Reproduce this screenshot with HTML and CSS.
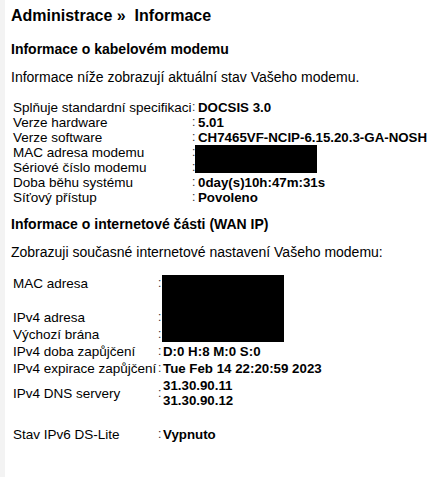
FILE: index.html
```html
<!DOCTYPE html>
<html lang="cs">
<head>
  <meta charset="UTF-8" />
  <title>Informace</title>
  <link rel="stylesheet" href="styles.css">
</head>
<body>
  <div class="page">
    <h1>Administrace &raquo;&nbsp; Informace</h1>

    <h2>Informace o kabelovém modemu</h2>
    <p>Informace níže zobrazují aktuální stav Vašeho modemu.</p>

    <div class="info">
      <table class="modem">
        <tr><td class="label">Splňuje standardní specifikaci</td><td class="colon">:</td><td class="value">DOCSIS 3.0</td></tr>
        <tr><td class="label">Verze hardware</td><td class="colon">:</td><td class="value">5.01</td></tr>
        <tr><td class="label">Verze software</td><td class="colon">:</td><td class="value">CH7465VF-NCIP-6.15.20.3-GA-NOSH</td></tr>
        <tr><td class="label">MAC adresa modemu</td><td class="colon">:</td><td class="value"></td></tr>
        <tr><td class="label">Sériové číslo modemu</td><td class="colon">:</td><td class="value"></td></tr>
        <tr><td class="label">Doba běhu systému</td><td class="colon">:</td><td class="value">0day(s)10h:47m:31s</td></tr>
        <tr><td class="label">Síťový přístup</td><td class="colon">:</td><td class="value">Povoleno</td></tr>
      </table>
      <div class="redact redact-modem"></div>
    </div>

    <h2 class="second">Informace o internetové části (WAN IP)</h2>
    <p>Zobrazuji současné internetové nastavení Vašeho modemu:</p>

    <div class="info">
      <table class="wan">
        <tr><td class="label">MAC adresa</td><td class="colon">:</td><td class="value"></td></tr>
        <tr><td class="label">&nbsp;</td><td class="colon"></td><td class="value"></td></tr>
        <tr><td class="label">IPv4 adresa</td><td class="colon">:</td><td class="value"></td></tr>
        <tr><td class="label">Výchozí brána</td><td class="colon">:</td><td class="value"></td></tr>
        <tr><td class="label">IPv4 doba zapůjčení</td><td class="colon">:</td><td class="value">D:0 H:8 M:0 S:0</td></tr>
        <tr><td class="label">IPv4 expirace zapůjčení</td><td class="colon">:</td><td class="value">Tue Feb 14 22:20:59 2023</td></tr>
        <tr><td class="label">IPv4 DNS servery</td><td class="colon">:</td><td class="value">31.30.90.11<br>31.30.90.12</td></tr>
        <tr><td class="label">&nbsp;</td><td class="colon"></td><td class="value"></td></tr>
        <tr><td class="label">Stav IPv6 DS-Lite</td><td class="colon">:</td><td class="value">Vypnuto</td></tr>
      </table>
      <div class="redact redact-wan"></div>
    </div>
  </div>
</body>
</html>
```

FILE: styles.css
```css
html, body {
  margin: 0;
  height: 100%;
}

body {
  font-family: "Liberation Sans", Arial, sans-serif;
  color: #000;
  background: #fff;
  border-left: 5px solid #f3f3f3;
}

.page {
  padding: 6px 0 0 6px;
}

h1 {
  font-size: 16px;
  font-weight: bold;
  margin: 0 0 14px;
  line-height: 20px;
}

h2 {
  font-size: 14px;
  font-weight: bold;
  margin: 0 0 10px;
  line-height: 18px;
}

h2.second {
  margin-top: 10px;
}

p {
  font-size: 14px;
  margin: 0 0 14px;
  line-height: 18px;
}

.info {
  position: relative;
}

table {
  border-collapse: collapse;
  font-size: 13.5px;
  margin-left: 2px;
}

td {
  padding: 0;
  vertical-align: middle;
  white-space: nowrap;
}

.modem td {
  line-height: 15px;
}

.modem .label {
  width: 179px;
}

.wan td {
  line-height: 15px;
  padding: 1px 0;
}

.wan .label {
  width: 145px;
}

.colon {
  width: 5px;
  font-size: 12px;
  color: #333;
}

.value {
  font-weight: bold;
  font-size: 13.3px;
  padding-left: 1px;
}

.redact {
  position: absolute;
  background: #000;
}

.redact-modem {
  left: 184px;
  top: 45px;
  width: 122px;
  height: 28px;
}

.redact-wan {
  left: 151px;
  top: 0;
  width: 122px;
  height: 67px;
}
```
